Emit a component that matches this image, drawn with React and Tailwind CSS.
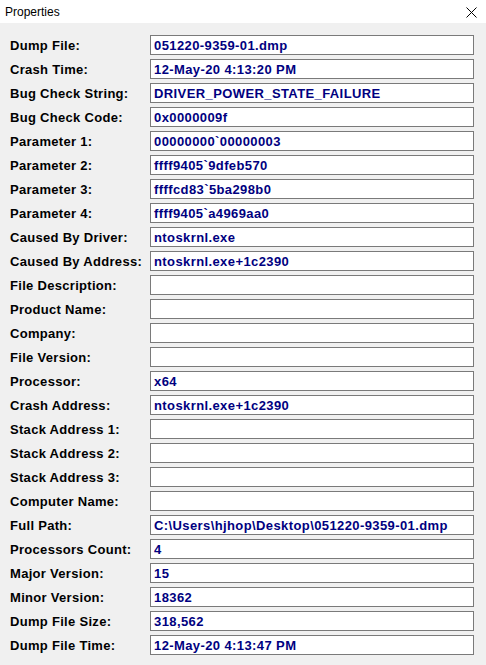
import React from "react";

const rows = [
  ["Dump File:", "051220-9359-01.dmp"],
  ["Crash Time:", "12-May-20 4:13:20 PM"],
  ["Bug Check String:", "DRIVER_POWER_STATE_FAILURE"],
  ["Bug Check Code:", "0x0000009f"],
  ["Parameter 1:", "00000000`00000003"],
  ["Parameter 2:", "ffff9405`9dfeb570"],
  ["Parameter 3:", "ffffcd83`5ba298b0"],
  ["Parameter 4:", "ffff9405`a4969aa0"],
  ["Caused By Driver:", "ntoskrnl.exe"],
  ["Caused By Address:", "ntoskrnl.exe+1c2390"],
  ["File Description:", ""],
  ["Product Name:", ""],
  ["Company:", ""],
  ["File Version:", ""],
  ["Processor:", "x64"],
  ["Crash Address:", "ntoskrnl.exe+1c2390"],
  ["Stack Address 1:", ""],
  ["Stack Address 2:", ""],
  ["Stack Address 3:", ""],
  ["Computer Name:", ""],
  ["Full Path:", "C:\\Users\\hjhop\\Desktop\\051220-9359-01.dmp"],
  ["Processors Count:", "4"],
  ["Major Version:", "15"],
  ["Minor Version:", "18362"],
  ["Dump File Size:", "318,562"],
  ["Dump File Time:", "12-May-20 4:13:47 PM"],
];

export default function App() {
  return (
    <div className="w-[486px] h-[665px] bg-[#f0f0f0] overflow-hidden flex flex-col">
      <div className="h-[23px] bg-white flex items-center justify-between pl-[5px] pr-[9px]">
        <span className="text-[12px] text-black" style={{ fontFamily: '"Liberation Sans", Arial, sans-serif' }}>
          Properties
        </span>
        <svg width="11" height="11" viewBox="0 0 11 11" className="mt-[1px]">
          <path d="M0.5 0.5L10.5 10.5M10.5 0.5L0.5 10.5" stroke="#000" strokeWidth="1" />
        </svg>
      </div>
      <div
        className="flex flex-col gap-[4px] pt-[12px] pl-[10px]"
        style={{ fontFamily: '"Liberation Sans", Arial, sans-serif' }}
      >
        {rows.map(([label, value]) => (
          <div key={label} className="flex items-center h-[20px]">
            <div className="w-[140px] text-[13px] font-bold tracking-[0.3px] text-black leading-none">
              {label}
            </div>
            <div className="w-[324px] h-[20px] bg-white border border-[#7a7a7a] flex items-center pl-[3px] text-[13px] font-bold tracking-[0.4px] text-[#000080] leading-none whitespace-nowrap overflow-hidden">
              {value}
            </div>
          </div>
        ))}
      </div>
    </div>
  );
}
